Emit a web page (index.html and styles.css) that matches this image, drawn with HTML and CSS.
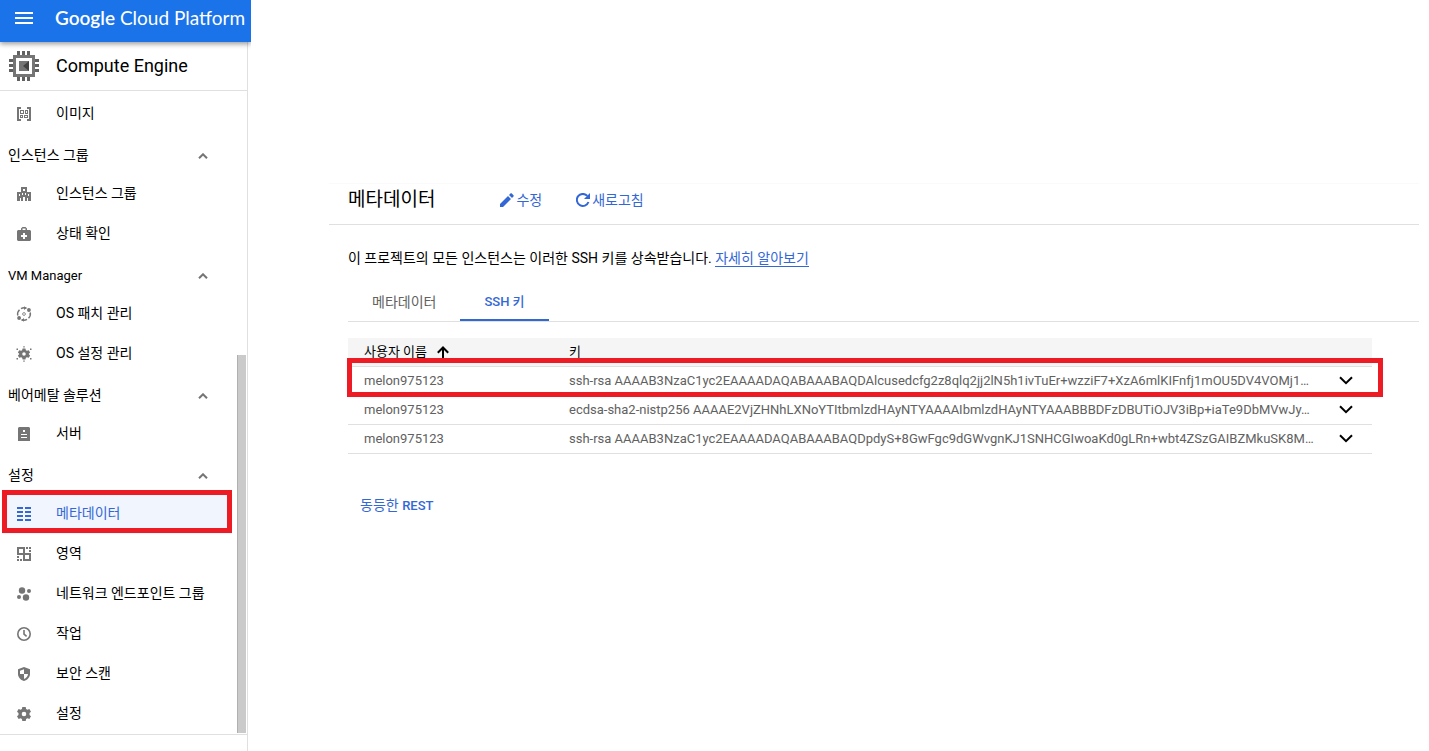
FILE: index.html
```html
<!DOCTYPE html>
<html lang="ko">
<head>
    <meta charset="UTF-8">
    <meta name="viewport" content="width=device-width, initial-scale=1.0">
    <title>메타데이터 - Compute Engine</title>
    <link rel="stylesheet" href="styles.css">
</head>
<body>
    <aside class="sidebar">
        <header class="topbar">
            <button class="menu-btn" aria-label="메뉴">
                <svg width="18" height="12" viewBox="0 0 18 12"><path d="M0 0h18v2H0zM0 5h18v2H0zM0 10h18v2H0z"/></svg>
            </button>
            <a class="brand" href="#"><span class="brand-google">Google</span> Cloud Platform</a>
        </header>

        <div class="panel">
            <div class="product">
                <svg width="30" height="30" viewBox="0 0 30 30">
                    <path fill="#757575" fill-rule="evenodd" d="M4 4h22v22H4zM7 7v16h16V7z"/>
                    <path fill="#616161" d="M8 0h3v4H8zM13 0h3v4h-3zM18 0h3v4h-3zM8 26h3v4H8zM13 26h3v4h-3zM18 26h3v4h-3zM0 8h4v3H0zM0 13h4v3H0zM0 18h4v3H0zM26 8h4v3h-4zM26 13h4v3h-4zM26 18h4v3h-4z"/>
                    <path fill="#757575" d="M10 10h10v10H10z"/>
                    <path fill="#424242" d="M20 10v10l-6-5z"/>
                </svg>
                <span>Compute Engine</span>
            </div>

            <nav class="nav">
                <a class="nav-item" href="#">
                    <svg class="icon" viewBox="0 0 14 14"><path d="M0 0h4v2H2v10h2v2H0zM10 0h4v14h-4v-2h2V2h-2z"/><path fill-rule="evenodd" d="M3 3h4v4H3zM4 4v2h2V4zM8 3h3v4H8zM9 4v2h1V4zM3 8h3v3H3zM4 9v1h1V9zM7 8h4v3H7zM8 9v1h2V9z"/></svg>
                    이미지
                </a>
                <button class="nav-group">인스턴스 그룹
                    <svg class="caret" viewBox="0 0 10 6"><path d="M1 5.300l4-4 4 4"/></svg>
                </button>
                <a class="nav-item" href="#">
                    <svg class="icon" viewBox="0 0 14 14"><path fill-rule="evenodd" d="M4 0h6v5h4v9h-3v-3h-1v3H8v-4H6v4H4v-3H3v3H0V5h4zM6 2v2h2V2zM5 6v2h1V6zM8 6v2h1V6zM2 7v2h1V7zM11 7v2h1V7z"/></svg>
                    인스턴스 그룹
                </a>
                <a class="nav-item" href="#">
                    <svg class="icon" viewBox="0 0 14 14"><path fill-rule="evenodd" d="M4 3V1.500L5.500 0h3L10 1.500V3h3l1 1v9l-1 1H1l-1-1V4l1-1zM5.500 3h3V1.500h-3zM6 6v2H4v2h2v2h2v-2h2V8H8V6z"/></svg>
                    상태 확인
                </a>
                <button class="nav-group latin">VM Manager
                    <svg class="caret" viewBox="0 0 10 6"><path d="M1 5.300l4-4 4 4"/></svg>
                </button>
                <a class="nav-item" href="#">
                    <svg class="icon" viewBox="0 0 14 14"><g fill="none" stroke="#757575" stroke-width="1.500"><path d="M.8 8.500A6.200 6.200 0 0 1 2.500 2.700M4 1.600A6.200 6.200 0 0 1 9.500 1.300M13.200 5.500A6.200 6.200 0 0 1 11.500 11.300M10 12.400A6.200 6.200 0 0 1 4.500 12.700"/><circle cx="7" cy="7" r="1.400" stroke-width=".8"/></g><circle cx="11.900" cy="3" r="1.900"/><circle cx="2.100" cy="11" r="1.900"/><path d="M7-.8l2.500 1.900L7 3zM7 14.800l-2.500-1.900L7 11z"/></svg>
                    OS 패치 관리
                </a>
                <a class="nav-item" href="#">
                    <svg class="icon" viewBox="0 0 14 14"><path fill-rule="evenodd" d="M5.600 1.500h2.800l.5 1.700 1 .5 1.900-.4 1.300 2.200-1.300 1.200v.6l1.300 1.200-1.300 2.200-1.900-.4-1 .5-.5 1.700H5.600l-.5-1.700-1-.5-1.900.4L.9 8.500l1.300-1.200v-.6L.9 5.500l1.300-2.200 1.900.4 1-.5zM7 5.200a1.800 1.800 0 1 0 0 3.600 1.800 1.800 0 0 0 0-3.600z"/><path d="M6.300-.8h1.400v1.400H6.300zM6.300 13.400h1.400v1.400H6.300zM-.5 1.500H1V3H-.5zM13 1.500h1.500V3H13zM-.5 11H1v1.500H-.5zM13 11h1.500v1.500H13z"/></svg>
                    OS 설정 관리
                </a>
                <button class="nav-group">베어메탈 솔루션
                    <svg class="caret" viewBox="0 0 10 6"><path d="M1 5.300l4-4 4 4"/></svg>
                </button>
                <a class="nav-item" href="#">
                    <svg class="icon" viewBox="0 0 14 14"><path fill-rule="evenodd" d="M2 0h10l1 1v13H1V1zM6 3v2h2V3zM4 7v1h6V7zM4 10v1h6v-1z"/></svg>
                    서버
                </a>
                <button class="nav-group">설정
                    <svg class="caret" viewBox="0 0 10 6"><path d="M1 5.300l4-4 4 4"/></svg>
                </button>
                <a class="nav-item active" href="#">
                    <svg class="icon" viewBox="0 0 14 14"><path d="M0 0h6v2H0zM8 0h6v2H8zM0 4h6v2H0zM8 4h6v2H8zM0 8h6v2H0zM8 8h6v2H8zM0 12h6v2H0zM8 12h6v2H8z"/></svg>
                    메타데이터
                </a>
                <a class="nav-item" href="#">
                    <svg class="icon" viewBox="0 0 14 14"><path fill-rule="evenodd" d="M0 0h8v6h6v8H6V8H0zM2 2v4h4V2zM8 8v4h4V8z"/><path d="M9 0h2v2H9zM12 0h2v2h-2zM12 3h2v2h-2zM0 9h2v2H0zM0 12h2v2H0zM3 12h2v2H3z"/></svg>
                    영역
                </a>
                <a class="nav-item" href="#">
                    <svg class="icon" viewBox="0 0 14 14"><circle cx="5" cy="3.500" r="3.200"/><circle cx="12" cy="4" r="2"/><circle cx="2" cy="10" r="2"/><circle cx="9" cy="10.500" r="3.200"/></svg>
                    네트워크 엔드포인트 그룹
                </a>
                <a class="nav-item" href="#">
                    <svg class="icon" viewBox="0 0 14 14"><g fill="none" stroke="#757575" stroke-width="1.600"><circle cx="7" cy="7" r="6.200"/><path d="M7 3v4.200l2.600 2.200"/></g></svg>
                    작업
                </a>
                <a class="nav-item" href="#">
                    <svg class="icon" viewBox="0 0 14 14"><path fill-rule="evenodd" d="M7 0l6 2.200V7c0 3.200-2.500 6-6 7-3.500-1-6-3.800-6-7V2.200zM7 2.200L3 3.700V7h4zM7 7v5c2.200-.8 3.800-2.700 4-5z"/></svg>
                    보안 스캔
                </a>
                <a class="nav-item" href="#">
                    <svg class="icon" viewBox="0 0 14 14"><path fill-rule="evenodd" d="M5.300 0h3.400l.4 2 1.300.8 2-.8L14 4.700 12.500 6v2L14 9.300 12.400 12l-2-.8-1.300.8-.4 2H5.300l-.4-2-1.300-.8-2 .8L0 9.300 1.500 8V6L0 4.700 1.600 2l2 .8L4.900 2zM7 4.700a2.300 2.300 0 1 0 0 4.600 2.300 2.300 0 0 0 0-4.600z"/></svg>
                    설정
                </a>
                <div class="scroll-thumb"></div>
            </nav>
        </div>
    </aside>

    <main class="content">
        <header class="page-header">
            <h1>메타데이터</h1>
            <button class="action">
                <svg width="14" height="14" viewBox="0 0 14 14"><path d="M0 11v3h3l8-8-3-3zM9 2l3 3 1.700-1.700v-.9L11.600.3h-.9z"/></svg>
                수정
            </button>
            <button class="action">
                <svg width="14" height="14" viewBox="0 0 14 14"><path fill="none" stroke="#3367d6" stroke-width="2" d="M12.500 9A6 6 0 1 1 11.300 2.900"/><path d="M14 0v6H8z"/></svg>
                새로고침
            </button>
        </header>

        <section class="page-body">
            <p class="intro">이 프로젝트의 모든 인스턴스는 이러한 SSH 키를 상속받습니다. <a href="#">자세히 알아보기</a></p>

            <div class="tabs" role="tablist">
                <button class="tab" role="tab">메타데이터</button>
                <button class="tab selected" role="tab" aria-selected="true">SSH 키</button>
            </div>

            <div class="table-wrap">
                <table>
                    <thead>
                        <tr>
                            <th class="col-user">사용자 이름
                                <svg width="12" height="13" viewBox="0 0 12 13"><path fill="none" stroke="#000" stroke-width="2" d="M6 13V2M.8 6.700L6 1.500l5.200 5.200"/></svg>
                            </th>
                            <th>키</th>
                            <th class="col-toggle"></th>
                        </tr>
                    </thead>
                    <tbody>
                        <tr>
                            <td>melon975123</td>
                            <td>ssh-rsa AAAAB3NzaC1yc2EAAAADAQABAAABAQDAlcusedcfg2z8qlq2jj2lN5h1ivTuEr+wzziF7+XzA6mlKIFnfj1mOU5DV4VOMj1…</td>
                            <td><button class="expand" aria-label="펼치기"><svg width="14" height="9" viewBox="0 0 14 9"><path d="M1 1.200l6 6 6-6"/></svg></button></td>
                        </tr>
                        <tr>
                            <td>melon975123</td>
                            <td>ecdsa-sha2-nistp256 AAAAE2VjZHNhLXNoYTItbmlzdHAyNTYAAAAIbmlzdHAyNTYAAABBBDFzDBUTiOJV3iBp+iaTe9DbMVwJy…</td>
                            <td><button class="expand" aria-label="펼치기"><svg width="14" height="9" viewBox="0 0 14 9"><path d="M1 1.200l6 6 6-6"/></svg></button></td>
                        </tr>
                        <tr>
                            <td>melon975123</td>
                            <td>ssh-rsa AAAAB3NzaC1yc2EAAAADAQABAAABAQDpdyS+8GwFgc9dGWvgnKJ1SNHCGIwoaKd0gLRn+wbt4ZSzGAIBZMkuSK8M…</td>
                            <td><button class="expand" aria-label="펼치기"><svg width="14" height="9" viewBox="0 0 14 9"><path d="M1 1.200l6 6 6-6"/></svg></button></td>
                        </tr>
                    </tbody>
                </table>
                <div class="row-marker"></div>
            </div>

            <a class="rest-link" href="#">동등한 <b>REST</b></a>
        </section>
    </main>
</body>
</html>
```
FILE: styles.css
```css
* {
    margin: 0;
    padding: 0;
    box-sizing: border-box;
}

body {
    display: flex;
    min-height: 100vh;
    background: #fff;
    color: #000;
    font-family: Roboto, "Noto Sans CJK KR", sans-serif;
    font-size: 14px;
    line-height: 20px;
}

button {
    border: none;
    background: none;
    color: inherit;
    font: inherit;
    cursor: pointer;
}

a {
    color: inherit;
    text-decoration: none;
}

svg {
    flex: none;
}

/* sidebar */
.sidebar {
    display: flex;
    flex-direction: column;
    flex: none;
    width: 251px;
}

.topbar {
    position: relative;
    z-index: 1;
    display: flex;
    align-items: center;
    height: 42px;
    padding: 0 0 6px 15px;
    gap: 22px;
    background: #1a73e8;
    box-shadow: 0 2px 5px rgba(0, 0, 0, 0.4);
    clip-path: inset(0 0 -10px 0);
    color: #fff;
}

.menu-btn {
    display: flex;
}

.menu-btn svg {
    fill: #fff;
}

.brand {
    font-family: Lato, sans-serif;
    font-size: 19px;
    white-space: nowrap;
}

.brand-google {
    font-weight: 600;
}

.panel {
    flex: 1;
    width: 248px;
    border-right: 1px solid #e0e0e0;
}

.product {
    display: flex;
    align-items: center;
    gap: 17px;
    height: 49px;
    padding-left: 9px;
    border-bottom: 1px solid #e0e0e0;
    font-size: 18px;
}

.nav {
    position: relative;
    padding-top: 3px;
    border-bottom: 1px solid #e0e0e0;
}

.nav-item {
    position: relative;
    display: flex;
    align-items: center;
    gap: 25px;
    height: 40px;
    padding: 0 0 2px 17px;
}

.icon {
    width: 14px;
    height: 14px;
    margin-top: 2px;
    overflow: visible;
    fill: #757575;
}

.nav-item.active {
    width: 230px;
    margin-left: 2px;
    padding-left: 15px;
    background: #f0f5fe;
    color: #3367d6;
}

.nav-item.active .icon {
    fill: #3367d6;
}

.nav-item.active::after {
    content: "";
    position: absolute;
    inset: -4px 0 1px;
    border: 5px solid #ed1c24;
}

.nav-group {
    display: flex;
    align-items: center;
    justify-content: space-between;
    width: 208px;
    height: 40px;
    padding: 1px 0 0 8px;
}

.nav-group.latin {
    padding-top: 3px;
    font-size: 13px;
}

.caret {
    width: 10px;
    height: 6px;
    margin-top: 2px;
    fill: none;
    stroke: #757575;
    stroke-width: 2;
}

.latin .caret {
    margin-top: 0;
}

.scroll-thumb {
    position: absolute;
    right: 1px;
    bottom: 1px;
    width: 9px;
    height: 378px;
    border-left: 1px solid #b0b0b0;
    background: #cacaca;
}

/* content */
.content {
    flex: 1;
    min-width: 0;
    padding: 183px 10px 0 78px;
}

.page-header {
    display: flex;
    align-items: center;
    height: 42px;
    padding: 0 0 9px 19px;
    border-top: 1px solid #fafafa;
    border-bottom: 1px solid #e0e0e0;
}

h1 {
    margin-right: 65px;
    font-size: 19px;
    font-weight: 400;
}

.action {
    display: flex;
    align-items: center;
    gap: 2px;
    margin-right: 34px;
    color: #3367d6;
}

.action svg {
    fill: #3367d6;
}

.page-body {
    padding: 23px 0 0 19px;
}

.intro a {
    border-bottom: 1px solid #3367d6;
    color: #3367d6;
}

.tabs {
    display: flex;
    margin-top: 16px;
    border-bottom: 1px solid #e0e0e0;
}

.tab {
    height: 37px;
    padding: 0 24px 2px;
    color: #616161;
}

.tab.selected {
    padding-bottom: 0;
    border-bottom: 2px solid #3367d6;
    color: #3367d6;
    font-size: 13px;
    font-weight: 500;
}

.table-wrap {
    position: relative;
    margin: 16px 47px 0 0;
}

table {
    width: 100%;
    border-collapse: collapse;
    table-layout: fixed;
}

th,
td {
    height: 29px;
    padding: 0 0 0 16px;
    border-bottom: 1px solid #e0e0e0;
    text-align: left;
    white-space: nowrap;
}

th {
    height: 28px;
    background: #f5f5f5;
    font-size: 13px;
    font-weight: 400;
}

td {
    overflow: hidden;
    color: #616161;
    font-size: 13px;
}

th svg {
    margin-left: 7px;
    vertical-align: middle;
}

.col-user {
    width: 205px;
}

.col-toggle {
    width: 49px;
}

.expand {
    display: flex;
}

.expand svg {
    fill: none;
    stroke: #000;
    stroke-width: 2;
}

.row-marker {
    position: absolute;
    top: 20px;
    left: -1px;
    right: -11px;
    height: 39px;
    border: 5px solid #ed1c24;
    pointer-events: none;
}

.rest-link {
    display: inline-block;
    margin: 41px 0 0 12px;
    color: #3367d6;
}

.rest-link b {
    font-size: 13px;
    font-weight: 500;
}
```
